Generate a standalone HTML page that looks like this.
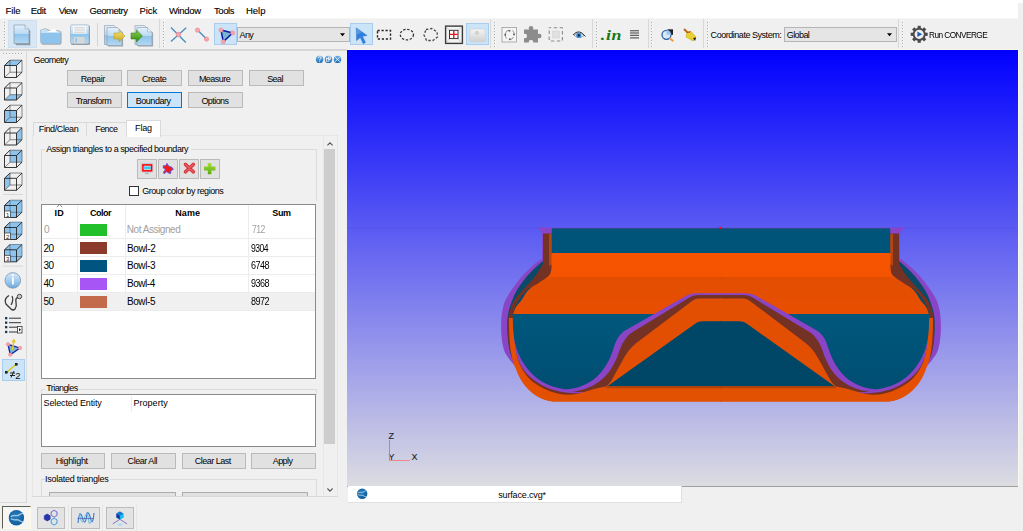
<!DOCTYPE html>
<html><head><meta charset="utf-8">
<style>
*{margin:0;padding:0;box-sizing:border-box}
html,body{width:1023px;height:531px;overflow:hidden;background:#f0f0f0;position:relative;font-family:"Liberation Sans",sans-serif}
.a{position:absolute}
.t,.m,.btn{-webkit-text-stroke:0.1px currentColor}
.tx{position:absolute;line-height:10px;white-space:pre;color:#000;-webkit-text-stroke:0.0px currentColor}
.t{position:absolute;font-size:9px;line-height:10px;letter-spacing:-0.45px;white-space:nowrap;color:#000}
.m{position:absolute;font-size:9.5px;line-height:10px;letter-spacing:-0.3px;white-space:nowrap;color:#000}
.btn{position:absolute;background:#e1e1e1;border:1px solid #bababa;font-size:9px;line-height:14px;letter-spacing:-0.45px;text-align:center;white-space:nowrap;color:#000}
.hl{position:absolute;background:#cce4f7;border:1px solid #a8cdee}
.sep{position:absolute;width:1px;background:#d5d5d5}
.grip{position:absolute;width:2px;background-image:linear-gradient(90deg,#a8a8a8 1px,#fdfdfd 1px);-webkit-mask-image:linear-gradient(#000 1.2px,transparent 1.2px);-webkit-mask-size:2px 3px}
.hgrip{position:absolute;height:2px;background-image:linear-gradient(#a8a8a8 1px,#fdfdfd 1px);-webkit-mask-image:linear-gradient(90deg,#000 1.5px,transparent 1.5px);-webkit-mask-size:3px 2px}
svg{position:absolute;overflow:visible}
</style></head><body>

<!-- menu bar -->
<div class="a" style="left:0;top:0;width:1023px;height:3px;background:#fff"></div>
<div class="a" style="left:0;top:0;width:1018px;height:18px;background:#fff"></div>
<div class="a" style="left:0;top:18px;width:1018px;height:1px;background:#f7f7f7"></div>

<!-- toolbar -->
<div class="a" style="left:0;top:49px;width:347px;height:1.5px;background:#d6d6d6"></div>
<div class="a" style="left:347px;top:49px;width:671px;height:1px;background:#f9f6e6"></div>
<!-- toolbar backgrounds -->
<div class="grip" style="left:3.5px;top:22px;height:26px"></div>
<div class="hl" style="left:7.5px;top:20px;width:29.5px;height:28px;background:#d9e6f3;border-color:#cfe0f2"></div>
<div class="sep" style="left:97px;top:23px;height:23px"></div>
<div class="a" style="left:158.5px;top:19px;width:1px;height:29px;background:#d8d8d8"></div>
<div class="grip" style="left:163px;top:22px;height:26px"></div>
<div class="hl" style="left:214px;top:23px;width:23px;height:22px"></div>
<div class="a" style="left:237px;top:27px;width:112.5px;height:14.5px;background:#e5e5e5;border:1px solid #b5b5b5"></div>
<div class="hl" style="left:349.5px;top:23px;width:23.5px;height:22px"></div>
<div class="hl" style="left:466px;top:23px;width:23px;height:21.5px"></div>
<div class="a" style="left:490px;top:19px;width:1px;height:29px;background:#d8d8d8"></div>
<div class="grip" style="left:493.5px;top:22px;height:26px"></div>
<div class="a" style="left:592px;top:19px;width:1px;height:29px;background:#d8d8d8"></div>
<div class="grip" style="left:595.5px;top:22px;height:26px"></div>
<div class="a" style="left:647.5px;top:19px;width:1px;height:29px;background:#d8d8d8"></div>
<div class="grip" style="left:651px;top:22px;height:26px"></div>
<div class="a" style="left:703px;top:19px;width:1px;height:29px;background:#d8d8d8"></div>
<div class="grip" style="left:706.5px;top:22px;height:26px"></div>
<div class="a" style="left:784px;top:27px;width:113px;height:15px;background:#e5e5e5;border:1px solid #b5b5b5"></div>
<div class="a" style="left:898px;top:19px;width:1px;height:29px;background:#d8d8d8"></div>
<div class="grip" style="left:901.5px;top:22px;height:26px"></div>


<!-- viewport -->
<div class="a" style="left:347px;top:50px;width:671px;height:436px;background:linear-gradient(#0000ff,#dcdce2)"></div>
<div class="a" style="left:1018px;top:50px;width:1px;height:436px;background:#fafaf0"></div>
<div class="a" style="left:347px;top:486px;width:671px;height:1px;background:#a0a0a0"></div>
<div class="a" style="left:347.5px;top:486px;width:334.5px;height:17px;background:#fff;border-right:1px solid #e0e0e0;border-bottom:1px solid #e0e0e0"></div>
<div class="t" style="left:388.5px;top:431px;color:#222">Z</div>
<div class="t" style="left:388.5px;top:452px;color:#222">Y</div>
<div class="t" style="left:411.5px;top:452px;color:#222">X</div>
<div class="a" style="left:388.5px;top:440px;width:1px;height:20px;background:#8888ff"></div>
<div class="a" style="left:389px;top:459.5px;width:21px;height:1px;background:#f08888"></div>

<div id="obj"><svg style="left:0;top:0" width="1023" height="531" viewBox="0 0 1023 531"><defs><linearGradient id="gor" gradientUnits="userSpaceOnUse" x1="0" y1="253" x2="0" y2="314">
<stop offset="0" stop-color="#f85400"/><stop offset="0.38" stop-color="#f45300"/><stop offset="0.43" stop-color="#e24e02"/><stop offset="1" stop-color="#e84e00"/></linearGradient>
<linearGradient id="gbl" gradientUnits="userSpaceOnUse" x1="0" y1="314" x2="0" y2="390">
<stop offset="0" stop-color="#00577c"/><stop offset="1" stop-color="#004e72"/></linearGradient></defs><path d="M347,228 H1018" stroke="#4848d8" stroke-width="0.7" opacity="0.35"/><path d="M722,227.8 H536.5 Q542,228.5 542,236 V258.5 C540.67,259.50 536.67,262.25 534.00,264.50 C531.33,266.75 528.50,269.42 526.00,272.00 C523.50,274.58 521.42,277.00 519.00,280.00 C516.58,283.00 513.75,286.67 511.50,290.00 C509.25,293.33 507.00,296.67 505.50,300.00 C504.00,303.33 503.20,306.67 502.50,310.00 C501.80,313.33 501.48,315.83 501.30,320.00 C501.12,324.17 500.95,330.00 501.40,335.00 C501.85,340.00 502.57,345.83 504.00,350.00 C505.43,354.17 508.00,357.17 510.00,360.00 C512.00,362.83 515.00,365.83 516.00,367.00 L722,367 Z" fill="#8a44c6" /><path d="M722,227.8 H536.5 Q542,228.5 542,236 V258.5 C540.67,259.50 536.67,262.25 534.00,264.50 C531.33,266.75 528.50,269.42 526.00,272.00 C523.50,274.58 521.42,277.00 519.00,280.00 C516.58,283.00 513.75,286.67 511.50,290.00 C509.25,293.33 507.00,296.67 505.50,300.00 C504.00,303.33 503.20,306.67 502.50,310.00 C501.80,313.33 501.48,315.83 501.30,320.00 C501.12,324.17 500.95,330.00 501.40,335.00 C501.85,340.00 502.57,345.83 504.00,350.00 C505.43,354.17 508.00,357.17 510.00,360.00 C512.00,362.83 515.00,365.83 516.00,367.00 L722,367 Z" fill="#8a44c6"  transform="translate(1442.0,0) scale(-1,1)"/>
<path d="M722,230 H543 V261 C541.92,261.92 538.75,264.42 536.50,266.50 C534.25,268.58 531.58,271.25 529.50,273.50 C527.42,275.75 526.08,277.25 524.00,280.00 C521.92,282.75 518.95,286.67 517.00,290.00 C515.05,293.33 513.72,296.33 512.30,300.00 C510.88,303.67 509.33,308.17 508.50,312.00 C507.67,315.83 507.38,318.33 507.30,323.00 C507.22,327.67 507.38,334.67 508.00,340.00 C508.62,345.33 509.50,350.67 511.00,355.00 C512.50,359.33 516.00,364.17 517.00,366.00 L722,367 Z" fill="#0a4a68" /><path d="M722,230 H543 V261 C541.92,261.92 538.75,264.42 536.50,266.50 C534.25,268.58 531.58,271.25 529.50,273.50 C527.42,275.75 526.08,277.25 524.00,280.00 C521.92,282.75 518.95,286.67 517.00,290.00 C515.05,293.33 513.72,296.33 512.30,300.00 C510.88,303.67 509.33,308.17 508.50,312.00 C507.67,315.83 507.38,318.33 507.30,323.00 C507.22,327.67 507.38,334.67 508.00,340.00 C508.62,345.33 509.50,350.67 511.00,355.00 C512.50,359.33 516.00,364.17 517.00,366.00 L722,367 Z" fill="#0a4a68"  transform="translate(1442.0,0) scale(-1,1)"/>
<path d="M722,230 H543 V264 C542.17,265.33 539.83,269.33 538.00,272.00 C536.17,274.67 534.67,276.83 532.00,280.00 C529.33,283.17 525.00,287.50 522.00,291.00 C519.00,294.50 516.17,297.17 514.00,301.00 C511.83,304.83 510.03,309.83 509.00,314.00 C507.97,318.17 507.88,321.33 507.80,326.00 C507.72,330.67 507.88,337.00 508.50,342.00 C509.12,347.00 510.08,352.00 511.50,356.00 C512.92,360.00 516.08,364.33 517.00,366.00 L722,367 Z" fill="#743224" /><path d="M722,230 H543 V264 C542.17,265.33 539.83,269.33 538.00,272.00 C536.17,274.67 534.67,276.83 532.00,280.00 C529.33,283.17 525.00,287.50 522.00,291.00 C519.00,294.50 516.17,297.17 514.00,301.00 C511.83,304.83 510.03,309.83 509.00,314.00 C507.97,318.17 507.88,321.33 507.80,326.00 C507.72,330.67 507.88,337.00 508.50,342.00 C509.12,347.00 510.08,352.00 511.50,356.00 C512.92,360.00 516.08,364.33 517.00,366.00 L722,367 Z" fill="#743224"  transform="translate(1442.0,0) scale(-1,1)"/>
<path d="M722,288 H529 C527.75,289.33 523.58,293.33 521.50,296.00 C519.42,298.67 518.03,300.92 516.50,304.00 C514.97,307.08 513.00,312.75 512.30,314.50 H722 Z" fill="#0a4a68" /><path d="M722,288 H529 C527.75,289.33 523.58,293.33 521.50,296.00 C519.42,298.67 518.03,300.92 516.50,304.00 C514.97,307.08 513.00,312.75 512.30,314.50 H722 Z" fill="#0a4a68"  transform="translate(1442.0,0) scale(-1,1)"/>
<path d="M722,318 H509 C509,346 511.5,360 516,369 C523,389 538,401.6 557,401.6 H722 Z" fill="#e64f02" /><path d="M722,318 H509 C509,346 511.5,360 516,369 C523,389 538,401.6 557,401.6 H722 Z" fill="#e64f02"  transform="translate(1442.0,0) scale(-1,1)"/>
<path d="M549,234 H552 V264 L549,266 Z" fill="#b8440e" /><path d="M549,234 H552 V264 L549,266 Z" fill="#b8440e"  transform="translate(1442.0,0) scale(-1,1)"/>
<path d="M536.5,227.8 H552 V233.5 H542.2 Q541.5,228.8 536.5,227.8 Z" fill="#8a44c6" /><path d="M536.5,227.8 H552 V233.5 H542.2 Q541.5,228.8 536.5,227.8 Z" fill="#8a44c6"  transform="translate(1442.0,0) scale(-1,1)"/>
<path d="M722,228.3 H551.8 V253.1 H722 Z" fill="#005479" /><path d="M722,228.3 H551.8 V253.1 H722 Z" fill="#005479"  transform="translate(1442.0,0) scale(-1,1)"/>
<path d="M722,253 H551.5 V268 C551.17,269.17 551.42,272.67 549.50,275.00 C547.58,277.33 543.52,279.50 540.00,282.00 C536.48,284.50 531.47,287.00 528.40,290.00 C525.33,293.00 523.67,297.17 521.60,300.00 C519.53,302.83 517.45,304.58 516.00,307.00 C514.55,309.42 513.42,313.25 512.90,314.50 H722 Z" fill="url(#gor)" /><path d="M722,253 H551.5 V268 C551.17,269.17 551.42,272.67 549.50,275.00 C547.58,277.33 543.52,279.50 540.00,282.00 C536.48,284.50 531.47,287.00 528.40,290.00 C525.33,293.00 523.67,297.17 521.60,300.00 C519.53,302.83 517.45,304.58 516.00,307.00 C514.55,309.42 513.42,313.25 512.90,314.50 H722 Z" fill="url(#gor)"  transform="translate(1442.0,0) scale(-1,1)"/>
<path d="M722,277.6 H551.5 V278.6 H722 Z" fill="#c84402" opacity="0.5"/><path d="M722,277.6 H551.5 V278.6 H722 Z" fill="#c84402" opacity="0.5" transform="translate(1442.0,0) scale(-1,1)"/>
<path d="M515,345 C515.50,347.50 516.50,355.50 518.00,360.00 C519.50,364.50 521.50,368.33 524.00,372.00 C526.50,375.67 529.33,379.08 533.00,382.00 C536.67,384.92 541.50,387.50 546.00,389.50 C550.50,391.50 553.50,392.83 560.00,394.00 C566.50,395.17 580.83,396.08 585.00,396.50 L585,386 L515,335 Z" fill="#743224" /><path d="M515,345 C515.50,347.50 516.50,355.50 518.00,360.00 C519.50,364.50 521.50,368.33 524.00,372.00 C526.50,375.67 529.33,379.08 533.00,382.00 C536.67,384.92 541.50,387.50 546.00,389.50 C550.50,391.50 553.50,392.83 560.00,394.00 C566.50,395.17 580.83,396.08 585.00,396.50 L585,386 L515,335 Z" fill="#743224"  transform="translate(1442.0,0) scale(-1,1)"/>
<path d="M514,338 C514.33,340.33 515.00,347.67 516.00,352.00 C517.00,356.33 518.00,360.17 520.00,364.00 C522.00,367.83 524.83,371.75 528.00,375.00 C531.17,378.25 535.00,381.08 539.00,383.50 C543.00,385.92 547.17,387.95 552.00,389.50 C556.83,391.05 562.50,392.08 568.00,392.80 C573.50,393.52 582.17,393.63 585.00,393.80 L585,386 L514,330 Z" fill="#8a44c6" /><path d="M514,338 C514.33,340.33 515.00,347.67 516.00,352.00 C517.00,356.33 518.00,360.17 520.00,364.00 C522.00,367.83 524.83,371.75 528.00,375.00 C531.17,378.25 535.00,381.08 539.00,383.50 C543.00,385.92 547.17,387.95 552.00,389.50 C556.83,391.05 562.50,392.08 568.00,392.80 C573.50,393.52 582.17,393.63 585.00,393.80 L585,386 L514,330 Z" fill="#8a44c6"  transform="translate(1442.0,0) scale(-1,1)"/>
<path d="M722,314 H512.8 C512.87,316.67 512.75,324.83 513.20,330.00 C513.65,335.17 514.28,340.33 515.50,345.00 C516.72,349.67 518.33,353.83 520.50,358.00 C522.67,362.17 525.58,366.50 528.50,370.00 C531.42,373.50 534.42,376.42 538.00,379.00 C541.58,381.58 545.33,383.75 550.00,385.50 C554.67,387.25 560.17,388.67 566.00,389.50 C571.83,390.33 581.83,390.33 585.00,390.50 H722 Z" fill="url(#gbl)" /><path d="M722,314 H512.8 C512.87,316.67 512.75,324.83 513.20,330.00 C513.65,335.17 514.28,340.33 515.50,345.00 C516.72,349.67 518.33,353.83 520.50,358.00 C522.67,362.17 525.58,366.50 528.50,370.00 C531.42,373.50 534.42,376.42 538.00,379.00 C541.58,381.58 545.33,383.75 550.00,385.50 C554.67,387.25 560.17,388.67 566.00,389.50 C571.83,390.33 581.83,390.33 585.00,390.50 H722 Z" fill="url(#gbl)"  transform="translate(1442.0,0) scale(-1,1)"/>
<path d="M722,293.3 H697 C692,293.3 688,294.5 684,297 L626,330 C619,334 616,340 613,350 C609,362 603,372 593,380 C584,386 575,389 562,390 L722,392 Z" fill="#8a44c6" /><path d="M722,293.3 H697 C692,293.3 688,294.5 684,297 L626,330 C619,334 616,340 613,350 C609,362 603,372 593,380 C584,386 575,389 562,390 L722,392 Z" fill="#8a44c6"  transform="translate(1442.0,0) scale(-1,1)"/>
<path d="M722,295.0 H699 C695,295.0 691.5,296 688.5,298 L631,333 C626,337 622,343 619,352 C615,364 609,374 600,381 C592,387 584,390 572,392 L722,393 Z" fill="#743224" /><path d="M722,295.0 H699 C695,295.0 691.5,296 688.5,298 L631,333 C626,337 622,343 619,352 C615,364 609,374 600,381 C592,387 584,390 572,392 L722,393 Z" fill="#743224"  transform="translate(1442.0,0) scale(-1,1)"/>
<path d="M722,298.6 H700 C697,298.6 694.5,299.2 692,301 L636.4,343 C630,348 626,354 622,361.6 L611.6,380.2 C609,384 606,387 603,388.5 L722,388.5 Z" fill="#e34f02" /><path d="M722,298.6 H700 C697,298.6 694.5,299.2 692,301 L636.4,343 C630,348 626,354 622,361.6 L611.6,380.2 C609,384 606,387 603,388.5 L722,388.5 Z" fill="#e34f02"  transform="translate(1442.0,0) scale(-1,1)"/>
<path d="M722,321.2 H703 C699,321.2 697,322 694.4,324.3 L607,386.6 H722 Z" fill="#004666" /><path d="M722,321.2 H703 C699,321.2 697,322 694.4,324.3 L607,386.6 H722 Z" fill="#004666"  transform="translate(1442.0,0) scale(-1,1)"/>
<path d="M722,386.4 H606 C594,388 584,393 572,394.5 L560,395 C548,395 538,393 528,387 C535,397 545,401.6 557,401.6 H722 Z" fill="#e25002" /><path d="M722,386.4 H606 C594,388 584,393 572,394.5 L560,395 C548,395 538,393 528,387 C535,397 545,401.6 557,401.6 H722 Z" fill="#e25002"  transform="translate(1442.0,0) scale(-1,1)"/>
<path d="M722,386.3 H606 V388.3 H722 Z" fill="#a8400e" opacity="0.8"/><path d="M722,386.3 H606 V388.3 H722 Z" fill="#a8400e" opacity="0.8" transform="translate(1442.0,0) scale(-1,1)"/>
<circle cx="720.2" cy="228" r="1.2" fill="#e0102a"/></svg></div>
<!-- left vertical toolbar -->
<div class="a" style="left:26px;top:50px;width:1px;height:453px;background:#d9d9d9"></div>
<div class="a" style="left:0;top:502px;width:26px;height:1px;background:#d9d9d9"></div>
<div class="hgrip" style="left:3px;top:53px;width:21px"></div>
<div class="hl" style="left:1.7px;top:358.8px;width:23px;height:22px"></div>
<div id="lefttb"><svg style="left:0;top:0" width="1023" height="531" viewBox="0 0 1023 531"><g transform="translate(0,60)"><path d="M4.5,5.5 L10.0,0.20000000000000018 H22.0 L16.5,5.5 Z" fill="#8ec3ec"/><path d="M10.0,0.20000000000000018 H22.0 V12.2 H10.0 Z M4.5,17.5 L10.0,12.2" fill="none" stroke="#555" stroke-width="0.7"/><path d="M4.5,5.5 H16.5 V17.5 H4.5 Z M4.5,5.5 L10.0,0.20000000000000018 M16.5,5.5 L22.0,0.20000000000000018 M16.5,17.5 L22.0,12.2" fill="none" stroke="#222" stroke-width="0.9"/></g><g transform="translate(0,82.5)"><path d="M4.5,17.5 L10.0,12.2 H22.0 L16.5,17.5 Z" fill="#8ec3ec"/><path d="M10.0,0.20000000000000018 H22.0 V12.2 H10.0 Z M4.5,17.5 L10.0,12.2" fill="none" stroke="#555" stroke-width="0.7"/><path d="M4.5,5.5 H16.5 V17.5 H4.5 Z M4.5,5.5 L10.0,0.20000000000000018 M16.5,5.5 L22.0,0.20000000000000018 M16.5,17.5 L22.0,12.2" fill="none" stroke="#222" stroke-width="0.9"/></g><g transform="translate(0,105)"><path d="M4.5,5.5 H16.5 V17.5 H4.5 Z" fill="#8ec3ec"/><path d="M10.0,0.20000000000000018 H22.0 V12.2 H10.0 Z M4.5,17.5 L10.0,12.2" fill="none" stroke="#555" stroke-width="0.7"/><path d="M4.5,5.5 H16.5 V17.5 H4.5 Z M4.5,5.5 L10.0,0.20000000000000018 M16.5,5.5 L22.0,0.20000000000000018 M16.5,17.5 L22.0,12.2" fill="none" stroke="#222" stroke-width="0.9"/></g><g transform="translate(0,127.5)"><path d="M16.5,5.5 L22.0,0.20000000000000018 V12.2 L16.5,17.5 Z" fill="#8ec3ec"/><path d="M10.0,0.20000000000000018 H22.0 V12.2 H10.0 Z M4.5,17.5 L10.0,12.2" fill="none" stroke="#555" stroke-width="0.7"/><path d="M4.5,5.5 H16.5 V17.5 H4.5 Z M4.5,5.5 L10.0,0.20000000000000018 M16.5,5.5 L22.0,0.20000000000000018 M16.5,17.5 L22.0,12.2" fill="none" stroke="#222" stroke-width="0.9"/></g><g transform="translate(0,150)"><path d="M10.0,0.20000000000000018 H22.0 V12.2 H10.0 Z" fill="#8ec3ec"/><path d="M10.0,0.20000000000000018 H22.0 V12.2 H10.0 Z M4.5,17.5 L10.0,12.2" fill="none" stroke="#555" stroke-width="0.7"/><path d="M4.5,5.5 H16.5 V17.5 H4.5 Z M4.5,5.5 L10.0,0.20000000000000018 M16.5,5.5 L22.0,0.20000000000000018 M16.5,17.5 L22.0,12.2" fill="none" stroke="#222" stroke-width="0.9"/></g><g transform="translate(0,172.8)"><path d="M4.5,5.5 L10.0,0.20000000000000018 V12.2 L4.5,17.5 Z" fill="#8ec3ec"/><path d="M10.0,0.20000000000000018 H22.0 V12.2 H10.0 Z M4.5,17.5 L10.0,12.2" fill="none" stroke="#555" stroke-width="0.7"/><path d="M4.5,5.5 H16.5 V17.5 H4.5 Z M4.5,5.5 L10.0,0.20000000000000018 M16.5,5.5 L22.0,0.20000000000000018 M16.5,17.5 L22.0,12.2" fill="none" stroke="#222" stroke-width="0.9"/></g><g transform="translate(0,200)"><path d="M4.5,5.5 L10.0,0.20000000000000018 H22.0 V12.2 L16.5,17.5 H4.5 Z" fill="#8ec3ec"/><path d="M10.0,0.20000000000000018 H22.0 V12.2 H10.0 Z M4.5,17.5 L10.0,12.2" fill="none" stroke="#4a6a88" stroke-width="0.7"/><path d="M4.5,5.5 H16.5 V17.5 H4.5 Z M4.5,5.5 L10.0,0.20000000000000018 M16.5,5.5 L22.0,0.20000000000000018 M16.5,17.5 L22.0,12.2" fill="none" stroke="#222" stroke-width="0.9"/><rect x="4.5" y="11.0" width="6" height="6.5" fill="#fff" stroke="#333" stroke-width="0.7"/><text x="6.1" y="16.5" font-family="Liberation Sans" font-size="6" fill="#222">1</text></g><g transform="translate(0,222)"><path d="M4.5,5.5 L10.0,0.20000000000000018 H22.0 V12.2 L16.5,17.5 H4.5 Z" fill="#8ec3ec"/><path d="M10.0,0.20000000000000018 H22.0 V12.2 H10.0 Z M4.5,17.5 L10.0,12.2" fill="none" stroke="#4a6a88" stroke-width="0.7"/><path d="M4.5,5.5 H16.5 V17.5 H4.5 Z M4.5,5.5 L10.0,0.20000000000000018 M16.5,5.5 L22.0,0.20000000000000018 M16.5,17.5 L22.0,12.2" fill="none" stroke="#222" stroke-width="0.9"/><rect x="4.5" y="11.0" width="6" height="6.5" fill="#fff" stroke="#333" stroke-width="0.7"/><text x="6.1" y="16.5" font-family="Liberation Sans" font-size="6" fill="#222">2</text></g><g transform="translate(0,244.3)"><path d="M4.5,5.5 L10.0,0.20000000000000018 H22.0 V12.2 L16.5,17.5 H4.5 Z" fill="#8ec3ec"/><path d="M10.0,0.20000000000000018 H22.0 V12.2 H10.0 Z M4.5,17.5 L10.0,12.2" fill="none" stroke="#4a6a88" stroke-width="0.7"/><path d="M4.5,5.5 H16.5 V17.5 H4.5 Z M4.5,5.5 L10.0,0.20000000000000018 M16.5,5.5 L22.0,0.20000000000000018 M16.5,17.5 L22.0,12.2" fill="none" stroke="#222" stroke-width="0.9"/><rect x="4.5" y="11.0" width="6" height="6.5" fill="#fff" stroke="#333" stroke-width="0.7"/><text x="6.1" y="16.5" font-family="Liberation Sans" font-size="6" fill="#222">3</text></g><path d="M3,194.5 H23 M3,266.2 H23" stroke="#d8d8d8" stroke-width="1"/><defs><linearGradient id="ginfo" x1="0" y1="0" x2="0" y2="1"><stop offset="0" stop-color="#d6eafa"/><stop offset="0.5" stop-color="#a4cdf0"/><stop offset="1" stop-color="#6aa8de"/></linearGradient></defs>
<circle cx="12.8" cy="280.4" r="7.8" fill="url(#ginfo)" stroke="#7d97b0" stroke-width="0.8"/>
<rect x="12" y="277.5" width="1.8" height="7" fill="#fff"/><circle cx="12.9" cy="275.3" r="1.1" fill="#fff"/><path d="M7,297 Q4,300 6,304 L11,309 Q13,311 15,309 Q17,306 16,302 Q15,298 19,297" fill="none" stroke="#3a3a3a" stroke-width="1.3"/>
<path d="M7,297 L9,295.5 M12,296 Q14,300 11,305" fill="none" stroke="#3a3a3a" stroke-width="1.2"/>
<circle cx="19.5" cy="296.5" r="2.2" fill="#ccc" stroke="#444" stroke-width="1"/><g fill="#1a3a5a"><rect x="5" y="317" width="2.3" height="2.3"/><rect x="5" y="321.5" width="2.3" height="2.3"/><rect x="5" y="326" width="2.3" height="2.3"/><rect x="5" y="330.8" width="2.3" height="2.3"/></g>
<path d="M9,318.2 H21 M9,322.7 H21 M9,327.2 H17 M9,332 H17" stroke="#333" stroke-width="1"/>
<rect x="17.5" y="326.5" width="4.5" height="6.5" fill="#fff" stroke="#333" stroke-width="0.8"/><path d="M19,328 L21,329.8 L19,331.5 Z" fill="#222"/><path d="M8,344.3 L20,348 L10.3,354.7 Z" fill="#7ab4cf" stroke="#0c1aa8" stroke-width="1.3" stroke-linejoin="round"/>
<path d="M12.5,350 L13.8,340.5" stroke="#e8c820" stroke-width="1.6"/><path d="M11.3,342 L14,338.5 L16,342.5 Z" fill="#e8c820"/>
<circle cx="8" cy="344.3" r="1.8" fill="#f6a3ab" stroke="#ee8791" stroke-width="0.5"/>
<circle cx="20" cy="348" r="1.8" fill="#f6a3ab" stroke="#ee8791" stroke-width="0.5"/>
<circle cx="10.3" cy="354.7" r="1.8" fill="#f6a3ab" stroke="#ee8791" stroke-width="0.5"/><path d="M6.5,372.3 L16,364.5" stroke="#d8c828" stroke-width="1.5"/>
<rect x="5" y="371" width="2.6" height="2.6" fill="#222"/><rect x="15" y="363" width="2.6" height="2.6" fill="#222"/>
<path d="M10,373 H15 M10,375.5 H15 M11,377.5 L14,371" stroke="#111" stroke-width="0.9"/>
<text x="15.3" y="379" font-family="Liberation Sans" font-size="9.5" fill="#111">2</text></svg></div>

<!-- dock panel -->
<div class="btn" style="left:67px;top:70px;width:55px;height:16px"></div>
<div class="btn" style="left:127px;top:70px;width:55px;height:16px"></div>
<div class="btn" style="left:188px;top:70px;width:55px;height:16px"></div>
<div class="btn" style="left:249px;top:70px;width:55px;height:16px"></div>
<div class="btn" style="left:67px;top:92px;width:55px;height:16px"></div>
<div class="btn" style="left:127px;top:92px;width:55px;height:16px;background:#cce4f7;border-color:#0078d7"></div>
<div class="btn" style="left:188px;top:92px;width:55px;height:16px"></div>

<!-- tabs -->
<div class="a" style="left:32px;top:135px;width:306px;height:362px;border:1px solid #e6e6e6;background:#f0f0f0"></div>
<div class="a" style="left:33px;top:122px;width:54px;height:14px;border:1px solid #d9d9d9;border-bottom:none;background:#f0f0f0"></div>
<div class="a" style="left:87px;top:122px;width:40px;height:14px;border:1px solid #d9d9d9;border-bottom:none;border-left:none;background:#f0f0f0"></div>
<div class="a" style="left:126px;top:120px;width:35px;height:17px;border:1px solid #d9d9d9;border-bottom:none;background:#fff"></div>
<!-- scrollbar -->
<div class="a" style="left:323px;top:136px;width:14px;height:360px;background:#f0f0f0;border-left:1px solid #e8e8e8"></div>
<div class="a" style="left:324px;top:149px;width:11px;height:295px;background:#cdcdcd"></div>
<!-- group box assign -->
<div class="a" style="left:40.5px;top:148.5px;width:276.5px;height:52px;border:1px solid #dcdcdc;border-bottom:none"></div>
<div class="a" style="left:45px;top:146px;width:146px;height:6px;background:#f0f0f0"></div>
<div class="btn" style="left:137px;top:159px;width:20px;height:19.5px"></div>
<div class="btn" style="left:158px;top:159px;width:20px;height:19.5px"></div>
<div class="btn" style="left:179px;top:159px;width:20px;height:19.5px"></div>
<div class="btn" style="left:200px;top:159px;width:20px;height:19.5px"></div>
<div class="a" style="left:129px;top:186px;width:10px;height:10px;background:#fff;border:1px solid #333"></div>
<!-- table -->
<div class="a" style="left:40.5px;top:203.5px;width:275px;height:175.5px;background:#fff;border:1px solid #8a8a8a"></div>
<div class="a" style="left:76.5px;top:204.5px;width:1px;height:105.5px;background:#ececec"></div>
<div class="a" style="left:124.5px;top:204.5px;width:1px;height:105.5px;background:#ececec"></div>
<div class="a" style="left:248px;top:204.5px;width:1px;height:105.5px;background:#ececec"></div>
<div class="a" style="left:41.5px;top:292.5px;width:273px;height:17.5px;background:#f0f0f0"></div>
<div class="a" style="left:41.5px;top:238px;width:273px;height:1px;background:#ececec"></div>
<div class="a" style="left:41.5px;top:256px;width:273px;height:1px;background:#ececec"></div>
<div class="a" style="left:41.5px;top:274px;width:273px;height:1px;background:#ececec"></div>
<div class="a" style="left:41.5px;top:292px;width:273px;height:1px;background:#ececec"></div>
<div class="a" style="left:41.5px;top:310px;width:273px;height:1px;background:#ececec"></div>
<svg style="left:56px;top:202.8px" width="8" height="5"><path d="M1,4.2 L3.6,1.2 L6.2,4.2" fill="none" stroke="#666" stroke-width="0.8"/></svg>
<div class="a" style="left:80px;top:224px;width:27px;height:11.5px;background:#22c02a"></div>
<div class="a" style="left:80px;top:242px;width:27px;height:11.5px;background:#8b3a2c"></div>
<div class="a" style="left:80px;top:260px;width:27px;height:11.5px;background:#005580"></div>
<div class="a" style="left:80px;top:278px;width:27px;height:11.5px;background:#a855f5"></div>
<div class="a" style="left:80px;top:296px;width:27px;height:11.5px;background:#c46a4c"></div>
<!-- triangles group -->
<div class="a" style="left:40.5px;top:388.5px;width:276.5px;height:6px;border:1px solid #dcdcdc;border-bottom:none"></div>
<div class="a" style="left:45px;top:385px;width:34px;height:6px;background:#f0f0f0"></div>
<div class="a" style="left:40.5px;top:393.5px;width:275px;height:53px;background:#fff;border:1px solid #8a8a8a"></div>
<div class="a" style="left:130.5px;top:396px;width:1px;height:16px;background:#ececec"></div>
<div class="btn" style="left:40.5px;top:453px;width:64.5px;height:15.5px"></div>
<div class="btn" style="left:111px;top:453px;width:64.5px;height:15.5px"></div>
<div class="btn" style="left:181.5px;top:453px;width:64px;height:15.5px"></div>
<div class="btn" style="left:251px;top:453px;width:64.5px;height:15.5px"></div>
<div class="a" style="left:40.5px;top:478.5px;width:276.5px;height:20px;border:1px solid #dcdcdc;border-bottom:none"></div>
<div class="a" style="left:45px;top:475px;width:65px;height:6px;background:#f0f0f0"></div>
<div class="a" style="left:48.5px;top:492px;width:127px;height:8px;background:#e1e1e1;border:1px solid #adadad"></div>
<div class="a" style="left:181.5px;top:492px;width:126.5px;height:8px;background:#e1e1e1;border:1px solid #adadad"></div>
<svg style="left:0;top:0" width="1023" height="531" viewBox="0 0 1023 531">
<defs><linearGradient id="gtb" x1="0" y1="0" x2="0" y2="1"><stop offset="0" stop-color="#6fb0e6"/><stop offset="1" stop-color="#1f6cb8"/></linearGradient>
<linearGradient id="gplus" x1="0" y1="0" x2="0" y2="1"><stop offset="0" stop-color="#a8e040"/><stop offset="1" stop-color="#5aa810"/></linearGradient></defs>
<!-- title icons -->
<circle cx="319.6" cy="59.4" r="3.7" fill="url(#gtb)"/>
<path d="M318.3,58.2 Q318.3,56.6 319.7,56.6 Q321.1,56.6 321.1,58 Q321.1,59 319.7,59.6 V60.6" fill="none" stroke="#fff" stroke-width="0.8"/><circle cx="319.7" cy="61.8" r="0.5" fill="#fff"/>
<circle cx="328.5" cy="59.4" r="3.7" fill="url(#gtb)"/>
<rect x="326.4" y="58.6" width="2.6" height="2.6" fill="none" stroke="#fff" stroke-width="0.7"/><rect x="328.2" y="57" width="2.4" height="2.4" fill="none" stroke="#fff" stroke-width="0.7"/>
<circle cx="337.5" cy="59.4" r="3.7" fill="url(#gtb)"/>
<path d="M335.2,57.1 L339.8,61.7 M339.8,57.1 L335.2,61.7" stroke="#fff" stroke-width="0.8"/>
<!-- monitor -->
<rect x="141.2" y="163.3" width="11.6" height="8.8" rx="1" fill="#c8d8e4" stroke="#a8b8c4" stroke-width="0.5"/>
<rect x="142.9" y="164.9" width="8.7" height="5.9" fill="none" stroke="#f00" stroke-width="1.5"/>
<rect x="143.7" y="166.6" width="7.1" height="2.5" fill="#40c8f0"/>
<path d="M144.5,172.5 H149.5 L148.5,174.2 H145.5 Z" fill="#b0b8c0"/>
<!-- star -->
<path d="M167,163.4 L168.8,166.3 L171.8,167.2 L173.3,169.3 L170.8,170.8 L170.6,173.6 L168.2,172.8 L166.8,171.6 L164,173.7 L163.6,172 L165.6,169.6 L163.2,167.8 L163.4,165.6 L165.6,165.9 Z" fill="#f81818" stroke="#5050e0" stroke-width="0.9" stroke-linejoin="round"/>
<!-- X -->
<path d="M185.5,164.5 L193.3,171.8 M193.3,164.5 L185.5,171.8" stroke="#d8343c" stroke-width="3.6" stroke-linecap="round"/>
<path d="M185.5,164.5 L193.3,171.8 M193.3,164.5 L185.5,171.8" stroke="#f07078" stroke-width="1.2" stroke-linecap="round" opacity="0.7"/>
<!-- plus -->
<path d="M207.8,163 H211.4 V166.6 H215.4 V170.4 H211.4 V174.2 H207.8 V170.4 H204 V166.6 H207.8 Z" fill="url(#gplus)"/>
<!-- scroll arrows -->
<path d="M327.4,145.4 L330,142.8 L332.6,145.4" fill="none" stroke="#555" stroke-width="1.1"/>
<path d="M327.4,488.5 L330,491.1 L332.6,488.5" fill="none" stroke="#555" stroke-width="1.1"/>
</svg>

<!-- panel bottom cover -->
<div class="a" style="left:27px;top:496px;width:320px;height:35px;background:#f0f0f0"></div>
<div class="a" style="left:32px;top:496px;width:306px;height:1px;background:#d9d9d9"></div>


<svg style="left:0;top:0" width="1023" height="531" viewBox="0 0 1023 531">
<defs>
<linearGradient id="gpage" x1="0" y1="0" x2="0" y2="1">
<stop offset="0" stop-color="#e4f0fb"/><stop offset="0.48" stop-color="#b9d9f2"/><stop offset="0.5" stop-color="#8ec4ec"/><stop offset="1" stop-color="#b5d8f3"/></linearGradient>
<linearGradient id="gyel" x1="0" y1="0" x2="0" y2="1"><stop offset="0" stop-color="#f5e27a"/><stop offset="1" stop-color="#c9a818"/></linearGradient>
<linearGradient id="ggrn" x1="0" y1="0" x2="0" y2="1"><stop offset="0" stop-color="#8ed050"/><stop offset="1" stop-color="#2e8a10"/></linearGradient>
<linearGradient id="gkey" x1="0" y1="0" x2="0" y2="1"><stop offset="0" stop-color="#f4f4f4"/><stop offset="1" stop-color="#d0d0d0"/></linearGradient>
</defs>
<!-- new -->
<path d="M15,26.5 H25.5 L29.5,30.5 V44.5 H15 Z" fill="#6f7a84" opacity="0.7" transform="translate(0.8,0.8)"/>
<path d="M14,25 H25 L29,29 V43.5 H14 Z" fill="url(#gpage)" stroke="#7d8fa0" stroke-width="0.6"/>
<path d="M25,25 V29 H29" fill="#dbeefa" stroke="#8aa0b5" stroke-width="0.6"/>
<!-- open folder -->
<path d="M41.5,30 L46,28 L50,30 L58,30 Q61,30 61,33 V42 Q61,44 59,44 H42.5 Q40.5,44 40.5,42 V32 Z" fill="#6f7a84" opacity="0.6" transform="translate(0.6,0.8)"/>
<path d="M40.5,30 L45,28.5 L49,30.5 L58,30.5 Q60.5,30.5 60.5,33 V41.5 Q60.5,43.5 58.5,43.5 H42.5 Q40.5,43.5 40.5,41.5 Z" fill="#c7e1f5" stroke="#8aa0b5" stroke-width="0.5"/>
<path d="M47,32 L54.5,28.5 L57,32 Z" fill="#fff"/>
<path d="M40.5,33 H60.5 V41.5 Q60.5,43.5 58.5,43.5 H42.5 Q40.5,43.5 40.5,41.5 Z" fill="#8ec4ec"/>
<!-- save -->
<rect x="71" y="25.5" width="19" height="19.5" rx="1.5" fill="#6f7a84" opacity="0.7"/>
<rect x="70.5" y="24.8" width="18.5" height="19" rx="1.5" fill="url(#gpage)" stroke="#8aa0b5" stroke-width="0.5"/>
<rect x="73" y="26" width="13" height="7.5" fill="#fbfbfb"/>
<path d="M74,27.8 H85 M74,30 H85 M74,32.2 H85" stroke="#9a9a9a" stroke-width="0.5"/>
<rect x="74" y="37" width="10.5" height="6.5" fill="#d8d8d8"/>
<rect x="75.5" y="38" width="1.5" height="4.5" fill="#8ec4ec"/>
<!-- import -->
<path d="M104.5,25.5 H114 L118,29.5 V44.5 H104.5 Z" fill="url(#gpage)" stroke="#8a98a6" stroke-width="0.6"/>
<path d="M107.5,28 H118 L122.5,32.5 V46 H107.5 Z" fill="#6f7a84" opacity="0.6" transform="translate(0.6,0.6)"/>
<path d="M107,27.5 H117.5 L122,32 V45.5 H107 Z" fill="url(#gpage)" stroke="#8a98a6" stroke-width="0.6"/>
<path d="M114,33 H119 V30 L125,36 L119,42 V39 H114 Z" fill="url(#gyel)" stroke="#b39a20" stroke-width="0.5"/>
<!-- export -->
<path d="M135,25.5 H144.5 L148.5,29.5 V44.5 H135 Z" fill="url(#gpage)" stroke="#8a98a6" stroke-width="0.6"/>
<path d="M137.5,28 H148 L152.5,32.5 V46 H137.5 Z" fill="#6f7a84" opacity="0.6" transform="translate(0.6,0.6)"/>
<path d="M137,27.5 H147.5 L152,32 V45.5 H137 Z" fill="url(#gpage)" stroke="#8a98a6" stroke-width="0.6"/>
<path d="M147.5,27.5 V32 H152" fill="#dbeefa" stroke="#8aa0b5" stroke-width="0.5"/>
<path d="M131,33 H136.5 V30 L142.5,36 L136.5,42 V39 H131 Z" fill="url(#ggrn)" stroke="#2c7a10" stroke-width="0.5"/>
<!-- X -->
<path d="M171,27.4 L185.8,42.6 M186.2,27.8 L171,41.5" stroke="#4a8fc0" stroke-width="1.4"/>
<circle cx="178.4" cy="34.4" r="2.3" fill="#f6a3ab" stroke="#ee8791" stroke-width="0.6"/>
<!-- line -->
<path d="M197.5,30.1 L206.5,39.1" stroke="#4a8fc0" stroke-width="1.4"/>
<circle cx="197.5" cy="30.1" r="2.2" fill="#f6a3ab" stroke="#ee8791" stroke-width="0.6"/>
<circle cx="206.5" cy="39.1" r="2.2" fill="#f6a3ab" stroke="#ee8791" stroke-width="0.6"/>
<!-- triangle -->
<path d="M221,30.1 L232.7,32.9 L223.3,41.8 Z" fill="#7ab4cf" stroke="#0c1aa8" stroke-width="1.5" stroke-linejoin="round"/>
<circle cx="221" cy="30.1" r="2.1" fill="#f6a3ab" stroke="#ee8791" stroke-width="0.5"/>
<circle cx="232.7" cy="32.9" r="2.1" fill="#f6a3ab" stroke="#ee8791" stroke-width="0.5"/>
<circle cx="223.3" cy="41.8" r="2.1" fill="#f6a3ab" stroke="#ee8791" stroke-width="0.5"/>
<!-- combo arrows -->
<path d="M340,33.3 H345 L342.5,36.3 Z" fill="#000"/>
<path d="M887,33.3 H892 L889.5,36.3 Z" fill="#000"/>
<!-- cursor arrow -->
<path d="M356.2,27.8 L367.1,35.6 L362.5,36.2 L365.5,42.5 L363.2,43.8 L360.3,37.5 L356.5,40.7 Z" fill="#2f7fe0" stroke="#2a6cc8" stroke-width="0.4"/>
<path d="M356.2,27.8 L362,32 L356.4,35 Z" fill="#6aa4d8" opacity="0.7"/>
<!-- dashed rect -->
<rect x="377.5" y="30.5" width="13" height="8.5" fill="none" stroke="#222" stroke-width="1.4" stroke-dasharray="2.2 1.8"/>
<!-- dashed ellipse -->
<ellipse cx="406.9" cy="34.6" rx="6.6" ry="5.3" fill="none" stroke="#333" stroke-width="1.3" stroke-dasharray="2.4 1.6"/>
<!-- dashed polygon -->
<path d="M426,29.5 L432,28.5 L437,32 L437.5,37 L433,40.5 L426.5,40.5 L424,35 Z" fill="none" stroke="#444" stroke-width="1.3" stroke-dasharray="2.4 1.8" stroke-linejoin="round"/>
<!-- framed cross -->
<rect x="445.6" y="26.1" width="16.8" height="17.3" fill="#f2f2f2" stroke="#3a3a3a" stroke-width="1.4"/>
<path d="M446,26.5 L449.5,30.5 M462,26.5 L458,30.5 M446,43 L449.5,38.5 M462,43 L458,38.5" stroke="#aaa" stroke-width="0.5"/>
<rect x="449.5" y="30.3" width="8.5" height="8.3" fill="#fff" stroke="#222" stroke-width="0.9"/>
<path d="M453.8,30.8 V38 M450,34.4 H457.5" stroke="#e8141c" stroke-width="1.4"/>
<!-- key -->
<path d="M471.5,29 H483.5 Q485,29 485,31 L486,40 Q486,41.8 484,41.8 H471 Q469.5,41.8 469.5,40 L470,31 Q470,29 471.5,29 Z" fill="url(#gkey)" stroke="#c8c8c8" stroke-width="0.5"/>
<circle cx="477" cy="32.8" r="1.3" fill="none" stroke="#999" stroke-width="0.5"/>
<!-- grey square icon -->
<rect x="502" y="27.5" width="14.5" height="14.5" fill="#f5f5f5" stroke="#9d9d9d" stroke-width="0.8"/>
<path d="M505.5,34 Q506,30 509.5,30.5 M512.5,30.5 Q514.5,32 514,34.5 M513.5,37 Q512,40 509.5,39.5 M506.5,38.5 Q505,36.5 505.5,35" fill="none" stroke="#777" stroke-width="0.8"/>
<circle cx="509.5" cy="30.8" r="1" fill="#666"/><circle cx="514" cy="34.5" r="1" fill="#666"/><circle cx="509.8" cy="39.2" r="1" fill="#666"/><circle cx="505.2" cy="34.8" r="1" fill="#666"/>
<!-- puzzle -->
<path d="M524,29.5 H529 Q528,26 531,26 Q534,26 533,29.5 H538 V34 Q541.5,33 541.5,36 Q541.5,39 538,38 V42.5 H533 Q534,40 531,40 Q528,40 529,42.5 H524 V38 Q527,39 527,36 Q527,33 524,34 Z" fill="#8c8c8c"/>
<!-- dashed square -->
<rect x="549.2" y="27.8" width="13.2" height="13.2" fill="none" stroke="#8a8a8a" stroke-width="1.1" stroke-dasharray="3.5 2.5" stroke-dashoffset="1.5"/>
<rect x="552.5" y="31" width="7" height="7" fill="#e0e0e0" stroke="#cfcfcf" stroke-width="0.5"/>
<!-- eye -->
<path d="M573,35 Q579,28 585.5,36.5" fill="none" stroke="#333" stroke-width="1"/>
<path d="M574,35.2 Q579,31 584,35.5 Q579,40 574,35.2 Z" fill="#e8f2fb" stroke="#555" stroke-width="0.5"/>
<circle cx="578.8" cy="35.4" r="2.6" fill="#3b8ee0"/>
<circle cx="578.8" cy="35.4" r="1.1" fill="#111"/>
<!-- .in -->
<text x="600.8" y="40.3" font-family="Liberation Serif" font-weight="bold" font-style="italic" font-size="15.5" fill="#16781a" letter-spacing="0.6" transform="translate(600.8,40.3) scale(1.15,1) translate(-600.8,-40.3)">.in</text>
<!-- lines -->
<path d="M630,30.8 H639 M630,33 H639 M630,35.3 H639 M630,37.8 H639" stroke="#3c3c3c" stroke-width="1"/>
<path d="M630,37.8 H639" stroke="#888" stroke-width="1.3"/>
<!-- magnifier -->
<rect x="667.5" y="29.3" width="5.5" height="5.5" fill="#222"/>
<circle cx="666.5" cy="34.8" r="4.5" fill="#d8e9f8" stroke="#2a5ea8" stroke-width="1.3"/>
<path d="M666.5,34.8 V30.3 A4.5,4.5 0 0 1 671,34.8 Z" fill="#9fc4e8"/>
<path d="M669.5,38 L673.3,41.3" stroke="#e89a40" stroke-width="1.8"/>
<!-- broom -->
<path d="M684,29 L688.5,33.5" stroke="#c0661a" stroke-width="2"/>
<path d="M687,32 L691,31.5 L696,37 L693,41 L686,37 Z" fill="#e8d030" stroke="#b8a010" stroke-width="0.5"/>
<path d="M687,32.5 L690.5,31.8" stroke="#c83020" stroke-width="1"/>
<path d="M693,38 L696.2,37.5 L695,41 Z" fill="#222"/>
<!-- gear -->
<g transform="translate(919.2,34.3)">
<g fill="#4a4a4a">
<rect x="-1.6" y="-8.5" width="3.2" height="17"/>
<rect x="-1.6" y="-8.5" width="3.2" height="17" transform="rotate(45)"/>
<rect x="-1.6" y="-8.5" width="3.2" height="17" transform="rotate(90)"/>
<rect x="-1.6" y="-8.5" width="3.2" height="17" transform="rotate(135)"/>
</g>
<circle r="6.5" fill="#4a4a4a"/>
<circle r="4.6" fill="#f0f0f0"/>
<path d="M-1.8,-2.8 L3,0 L-1.8,2.8 Z" fill="#1f5fb0"/>
<circle r="4.6" fill="none" stroke="#1f5fb0" stroke-width="0" />
</g>
</svg>

<!-- bottom buttons -->
<div class="a" style="left:1.8px;top:506.3px;width:29.5px;height:23.2px;background:#f6f6f4;border-top:1.2px solid #5e5e4c;border-left:1.2px solid #5e5e4c;border-right:1px solid #fbfbe8;border-bottom:1px solid #fbfbe8"></div>
<div class="a" style="left:37px;top:507.2px;width:28px;height:21.6px;background:#e3e3e3;border:1px solid #bcbcbc"></div>
<div class="a" style="left:71.2px;top:507.2px;width:28.4px;height:21.6px;background:#e3e3e3;border:1px solid #bcbcbc"></div>
<div class="a" style="left:106px;top:507.2px;width:28px;height:21.6px;background:#e3e3e3;border:1px solid #bcbcbc"></div>
<div class="a" style="left:67.5px;top:505px;width:1px;height:26px;background:#e6e6e6"></div>
<div class="a" style="left:101.5px;top:505px;width:1px;height:26px;background:#e6e6e6"></div>
<div class="a" style="left:135.5px;top:505px;width:1px;height:26px;background:#e6e6e6"></div>
<svg style="left:0;top:0" width="1023" height="531" viewBox="0 0 1023 531">
<defs><radialGradient id="gcv" cx="0.45" cy="0.4" r="0.65"><stop offset="0" stop-color="#2a80c0"/><stop offset="1" stop-color="#0d5896"/></radialGradient>
<radialGradient id="gglow" cx="0.5" cy="0.5" r="0.5"><stop offset="0" stop-color="#9ad8f4"/><stop offset="1" stop-color="#9ad8f4" stop-opacity="0"/></radialGradient></defs>
<circle cx="16.4" cy="517.7" r="7.7" fill="url(#gcv)"/>
<path d="M10.8,516.8 C13.5,514.2 16.5,516.6 18.8,515.2 C20.3,514.3 21.5,513.2 23.2,513.4 M10.8,518.6 C13.5,521.2 16.5,518.8 18.8,520.2 C20.3,521.1 21.5,522.2 23.2,522" fill="none" stroke="#b0d4f0" stroke-width="1.4" opacity="0.85"/>
<circle cx="362.2" cy="493.8" r="5.2" fill="url(#gcv)"/>
<path d="M357.8,493.2 C359.6,491.4 361.6,493 363.1,492.1 C364.1,491.5 365,490.8 366.2,490.9 M357.8,494.4 C359.6,496.2 361.6,494.6 363.1,495.5 C364.1,496.1 365,496.8 366.2,496.7" fill="none" stroke="#b0d4f0" stroke-width="1" opacity="0.85"/>
<!-- molecule -->
<path d="M47.2,514.1 L50.1,515.8 V519.2 L47.2,520.9 L44.3,519.2 V515.8 Z" fill="#2a36a8" stroke="#2a36a8" stroke-width="0.8"/>
<path d="M54.1,510.3 L57,512 V515.4 L54.1,517.1 L51.2,515.4 V512 Z" fill="none" stroke="#6a6ad0" stroke-width="1"/>
<path d="M54.1,518.2 L57,519.9 V523.3 L54.1,525 L51.2,523.3 V519.9 Z" fill="none" stroke="#3a9ae0" stroke-width="1"/>
<!-- wave -->
<path d="M78,523 C79,512 81,512 82.5,518 C84,524 86,524 87,513 C88,512 89.5,514 90.5,518 C91.5,523 93,524 94,513" fill="none" stroke="#3a78c8" stroke-width="1.1"/>
<path d="M79.5,513 C81,524 83,524 84.5,518 C86,512 88,512 89,523 C90,524 91.5,522 92.5,518" fill="none" stroke="#5ab8e8" stroke-width="1"/>
<path d="M77.5,518.5 H94" stroke="#6a5ab0" stroke-width="0.8"/>
<!-- crystal -->
<ellipse cx="119.9" cy="524.5" rx="3.5" ry="2.2" fill="url(#gglow)"/>
<path d="M112.7,523.9 L119.9,519.3 L127.1,523.9" fill="none" stroke="#6a5ab8" stroke-width="0.8"/>
<path d="M119.9,511.6 L123.4,513.6 V517.6 L119.9,519.6 L116.4,517.6 V513.6 Z" fill="#18a8e8"/>
<path d="M116.4,513.6 L119.9,515.6 V519.6 L116.4,517.6 Z" fill="#2a2aa0"/>
<path d="M119.9,515.6 L123.4,513.6 V517.6 L119.9,519.6 Z" fill="#10c0f0"/>
<path d="M116.4,513.6 L119.9,511.6 L123.4,513.6 L119.9,515.6 Z" fill="#1a78d0"/>
</svg>


<div class="tx" style="left:5.6px;top:5.7px;font-size:9.5px;letter-spacing:-0.133px;-webkit-text-stroke:0.12px #000">File</div>
<div class="tx" style="left:30.7px;top:5.7px;font-size:9.5px;letter-spacing:-0.285px;-webkit-text-stroke:0.12px #000">Edit</div>
<div class="tx" style="left:58.8px;top:5.7px;font-size:9.5px;letter-spacing:-0.6px;-webkit-text-stroke:0.12px #000">View</div>
<div class="tx" style="left:89.6px;top:5.7px;font-size:9.5px;letter-spacing:-0.476px;-webkit-text-stroke:0.12px #000">Geometry</div>
<div class="tx" style="left:139.6px;top:5.7px;font-size:9.5px;letter-spacing:-0.107px;-webkit-text-stroke:0.12px #000">Pick</div>
<div class="tx" style="left:168.9px;top:5.7px;font-size:9.5px;letter-spacing:-0.31px;-webkit-text-stroke:0.12px #000">Window</div>
<div class="tx" style="left:213.9px;top:5.7px;font-size:9.5px;letter-spacing:-0.388px;-webkit-text-stroke:0.12px #000">Tools</div>
<div class="tx" style="left:245.9px;top:5.7px;font-size:9.5px;letter-spacing:0.04px;-webkit-text-stroke:0.12px #000">Help</div>
<div class="tx" style="left:33.5px;top:54.6px;font-size:9px;letter-spacing:-0.591px">Geometry</div>
<div class="tx" style="left:80.7px;top:74px;font-size:9px;letter-spacing:-0.378px">Repair</div>
<div class="tx" style="left:141.9px;top:73.8px;font-size:9px;letter-spacing:-0.426px">Create</div>
<div class="tx" style="left:198.9px;top:73.8px;font-size:9px;letter-spacing:-0.522px">Measure</div>
<div class="tx" style="left:267.2px;top:73.8px;font-size:9px;letter-spacing:-0.6px">Seal</div>
<div class="tx" style="left:75.8px;top:95.9px;font-size:9px;letter-spacing:-0.6px">Transform</div>
<div class="tx" style="left:135.7px;top:96px;font-size:9px;letter-spacing:-0.45px">Boundary</div>
<div class="tx" style="left:201.4px;top:96px;font-size:9px;letter-spacing:-0.565px">Options</div>
<div class="tx" style="left:38.8px;top:123.6px;font-size:9px;letter-spacing:-0.404px">Find/Clean</div>
<div class="tx" style="left:95.2px;top:123.6px;font-size:9px;letter-spacing:-0.534px">Fence</div>
<div class="tx" style="left:135.1px;top:122.8px;font-size:9px;letter-spacing:-0.209px">Flag</div>
<div class="tx" style="left:46.2px;top:143.6px;font-size:9px;letter-spacing:-0.429px">Assign triangles to a specified boundary</div>
<div class="tx" style="left:142.2px;top:185.5px;font-size:9px;letter-spacing:-0.448px">Group color by regions</div>
<div class="tx" style="left:54.5px;top:208.2px;font-size:9px;letter-spacing:0.3px;font-weight:bold">ID</div>
<div class="tx" style="left:90.1px;top:208px;font-size:9px;letter-spacing:-0.53px;font-weight:bold">Color</div>
<div class="tx" style="left:175.3px;top:208px;font-size:9px;letter-spacing:0.039px;font-weight:bold">Name</div>
<div class="tx" style="left:272.2px;top:208px;font-size:9px;letter-spacing:-0.313px;font-weight:bold">Sum</div>
<div class="tx" style="left:44.0px;top:225.1px;font-size:10px;letter-spacing:-0.6px;color:#a0a0a0">0</div>
<div class="tx" style="left:126.8px;top:225.1px;font-size:10px;letter-spacing:-0.454px;color:#a0a0a0">Not Assigned</div>
<div class="tx" style="left:251.7px;top:225.1px;font-size:10px;letter-spacing:-0.6px;color:#a0a0a0;transform:scaleX(0.867);transform-origin:0 0">712</div>
<div class="tx" style="left:43.5px;top:243.5px;font-size:10px;letter-spacing:-0.6px">20</div>
<div class="tx" style="left:126.9px;top:243.5px;font-size:10px;letter-spacing:-0.326px">Bowl-2</div>
<div class="tx" style="left:251.3px;top:243.5px;font-size:10px;letter-spacing:-0.6px;transform:scaleX(0.862);transform-origin:0 0">9304</div>
<div class="tx" style="left:43.5px;top:261.4px;font-size:10px;letter-spacing:-0.6px">30</div>
<div class="tx" style="left:126.9px;top:261.4px;font-size:10px;letter-spacing:-0.376px">Bowl-3</div>
<div class="tx" style="left:251.3px;top:261.4px;font-size:10px;letter-spacing:-0.6px;transform:scaleX(0.905);transform-origin:0 0">6748</div>
<div class="tx" style="left:43.5px;top:279.3px;font-size:10px;letter-spacing:-0.6px">40</div>
<div class="tx" style="left:126.9px;top:279.3px;font-size:10px;letter-spacing:-0.426px">Bowl-4</div>
<div class="tx" style="left:251.3px;top:279.3px;font-size:10px;letter-spacing:-0.6px;transform:scaleX(0.905);transform-origin:0 0">9368</div>
<div class="tx" style="left:43.5px;top:297.2px;font-size:10px;letter-spacing:-0.6px">50</div>
<div class="tx" style="left:126.9px;top:297.2px;font-size:10px;letter-spacing:-0.376px">Bowl-5</div>
<div class="tx" style="left:251.3px;top:297.2px;font-size:10px;letter-spacing:-0.6px;transform:scaleX(0.905);transform-origin:0 0">8972</div>
<div class="tx" style="left:46.3px;top:383.3px;font-size:9px;letter-spacing:-0.6px">Triangles</div>
<div class="tx" style="left:43.5px;top:398.3px;font-size:9px;letter-spacing:-0.119px">Selected Entity</div>
<div class="tx" style="left:133.4px;top:398.3px;font-size:9px;letter-spacing:0.052px">Property</div>
<div class="tx" style="left:55.7px;top:455.9px;font-size:9px;letter-spacing:-0.331px">Highlight</div>
<div class="tx" style="left:127.6px;top:455.9px;font-size:9px;letter-spacing:-0.455px">Clear All</div>
<div class="tx" style="left:194.8px;top:455.9px;font-size:9px;letter-spacing:-0.516px">Clear Last</div>
<div class="tx" style="left:272.8px;top:455.9px;font-size:9px;letter-spacing:-0.6px">Apply</div>
<div class="tx" style="left:45.0px;top:473.7px;font-size:9px;letter-spacing:-0.259px">Isolated triangles</div>
<div class="tx" style="left:239.5px;top:29.7px;font-size:9px;letter-spacing:-0.567px">Any</div>
<div class="tx" style="left:710.6px;top:29.7px;font-size:9px;letter-spacing:-0.465px">Coordinate System:</div>
<div class="tx" style="left:786.8px;top:29.7px;font-size:9px;letter-spacing:-0.6px">Global</div>
<div class="tx" style="left:929.48px;top:29.7px;font-size:9px;letter-spacing:-0.6px;transform:scaleX(0.919);transform-origin:0 0">Run CONVERGE</div>
<div class="tx" style="left:498.2px;top:489.6px;font-size:9px;letter-spacing:-0.15px">surface.cvg*</div>
</body></html>
